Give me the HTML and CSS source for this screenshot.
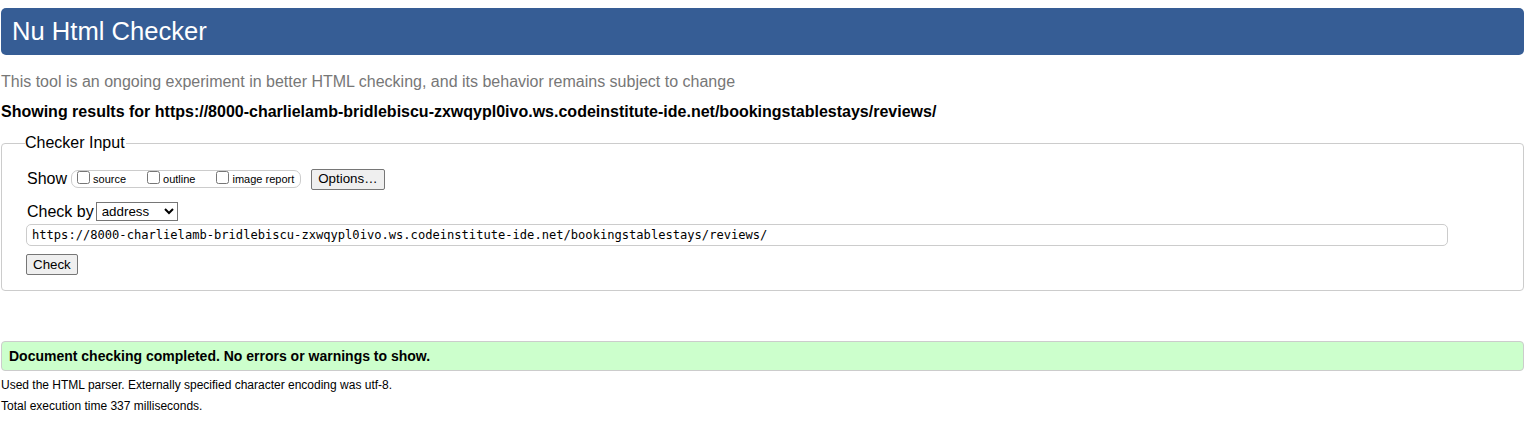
FILE: index.html
```html
<!DOCTYPE html>
<html lang="en">
<head>
<meta charset="utf-8">
<title>Showing results for https://8000-charlielamb-bridlebiscu-zxwqypl0ivo.ws.codeinstitute-ide.net/bookingstablestays/reviews/ - Nu Html Checker</title>
<link rel="stylesheet" href="styles.css">
</head>
<body>
<div class="page">
  <h1 class="title">Nu Html Checker</h1>
  <p class="intro">This tool is an ongoing experiment in better HTML checking, and its behavior remains subject to change</p>
  <p class="showing">Showing results for https://8000-charlielamb-bridlebiscu-zxwqypl0ivo.ws.codeinstitute-ide.net/bookingstablestays/reviews/</p>
  <fieldset class="input-box">
    <legend class="legend">Checker Input</legend>
    <div class="row show-row">
      <span class="label">Show</span>
      <span class="opts">
        <label class="opt"><input type="checkbox">source</label>
        <label class="opt"><input type="checkbox">outline</label>
        <label class="opt"><input type="checkbox">image report</label>
      </span>
      <button class="btn options-btn" type="button">Options…</button>
    </div>
    <div class="row by-row">
      <span class="label">Check by</span>
      <select class="sel"><option>address</option><option>file upload</option><option>text input</option></select>
    </div>
    <input class="url" type="text" value="https://8000-charlielamb-bridlebiscu-zxwqypl0ivo.ws.codeinstitute-ide.net/bookingstablestays/reviews/">
    <button class="btn check-btn" type="button">Check</button>
  </fieldset>
  <p class="success">Document checking completed. No errors or warnings to show.</p>
  <p class="details">Used the HTML parser. Externally specified character encoding was utf-8.</p>
  <p class="details">Total execution time 337 milliseconds.</p>
</div>
</body>
</html>
```
FILE: styles.css
```css
html, body {
  margin: 0;
  padding: 0;
  background: #fff;
}
body {
  font-family: "Liberation Sans", Arial, sans-serif;
  color: #000;
}
.page {
  padding: 8px 12px 0 1px;
  display: flex;
  flex-direction: column;
}
.title {
  margin: 0;
  height: 47px;
  box-sizing: border-box;
  padding: 8px 11px 0;
  background: #365d95;
  color: #fff;
  font-weight: normal;
  font-size: 25.6px;
  line-height: 30px;
  border-radius: 5px;
}
.intro {
  margin: 17px 0 0;
  color: #777;
  font-size: 16px;
  line-height: 20px;
}
.showing {
  margin: 10px 0 0;
  font-weight: bold;
  font-size: 16px;
  line-height: 20px;
}
.input-box {
  margin: 12px 0 0;
  border: 1px solid #ccc;
  border-radius: 4px;
  padding: 0 0 15px 24px;
  min-width: 0;
  display: flex;
  flex-direction: column;
  align-items: flex-start;
}
.legend {
  font-size: 16px;
  padding: 0 1px 0 0;
  margin-left: -1px;
  line-height: 18px;
}
.row {
  display: flex;
  align-items: center;
}
.show-row {
  margin-top: 16px;
  margin-left: 1px;
  height: 22px;
}
.label {
  font-size: 16px;
  line-height: 18px;
}
.opts {
  margin-left: 4px;
  display: flex;
  align-items: center;
  height: 16px;
  border: 1px solid #ccc;
  border-radius: 7px;
  padding: 0 6px 0 5px;
}
.opt {
  font-size: 11px;
  display: flex;
  align-items: center;
  line-height: 14px;
  margin-right: 21px;
}
.opt:last-child {
  margin-right: 0;
}
.opt input {
  width: 13px;
  height: 13px;
  margin: 0 3px 0 0;
  position: relative;
  top: -2px;
}
.btn {
  font-family: "Liberation Sans", Arial, sans-serif;
  font-size: 13.33px;
  background: #efefef;
  border: 1px solid #767676;
  border-radius: 2px;
  color: #000;
  padding: 1px 6px;
  line-height: 16px;
}
.options-btn {
  margin-left: 10px;
  height: 21px;
}
.by-row {
  margin-top: 12px;
  margin-left: 1px;
}
.sel {
  font-family: "Liberation Sans", Arial, sans-serif;
  font-size: 13.33px;
  width: 82px;
  height: 19px;
  margin-left: 2px;
  border: 1px solid #767676;
  border-radius: 0;
  background: #fff;
  padding: 0 0 0 1px;
}
.url {
  margin-top: 3px;
  width: 1422px;
  height: 22px;
  box-sizing: border-box;
  border: 1px solid #ccc;
  border-radius: 5px;
  padding: 0 5px;
  font-family: "DejaVu Sans Mono", "Liberation Mono", monospace;
  font-size: 12.1px;
  color: #000;
}
.check-btn {
  margin-top: 8px;
  height: 21px;
}
.success {
  margin: 50px 0 0;
  background: #ccffcc;
  border: 1px solid #ccc;
  border-radius: 4px;
  height: 30px;
  box-sizing: border-box;
  padding: 0 7px;
  display: flex;
  align-items: center;
  font-weight: bold;
  font-size: 14px;
}
.details {
  margin: 7px 0 0;
  font-size: 12px;
  line-height: 14px;
}
```
